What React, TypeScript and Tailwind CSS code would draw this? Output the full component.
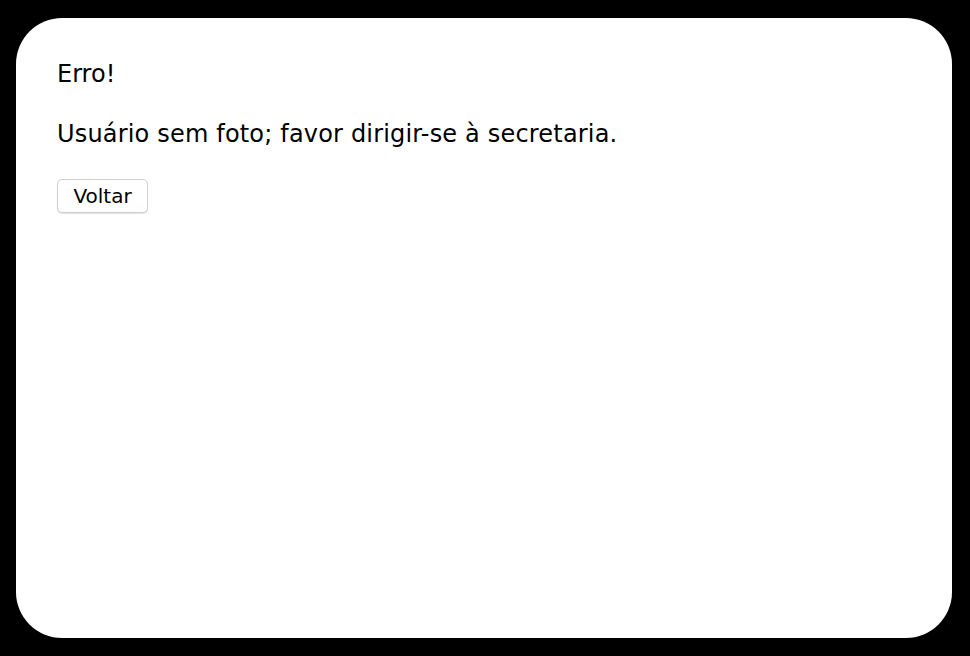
export default function App() {
  return (
    <div className="min-h-screen bg-black p-[16px] pt-[18px] pb-[18px] font-['DejaVu_Sans',sans-serif] text-black">
      <div className="h-[620px] w-[936px] rounded-[46px] bg-white px-[41px] pt-[42px]">
        <p className="text-[24px] leading-[28px]">Erro!</p>
        <p className="mt-[32px] text-[24px] leading-[28px] tracking-[0.18px]">Usuário sem foto; favor dirigir-se à secretaria.</p>
        <button className="mt-[31px] h-[34px] w-[91px] rounded-[5px] border border-[#cfcfcf] bg-white text-[20px] leading-none shadow-[0_1px_1px_rgba(0,0,0,0.12)]">
          Voltar
        </button>
      </div>
    </div>
  );
}
